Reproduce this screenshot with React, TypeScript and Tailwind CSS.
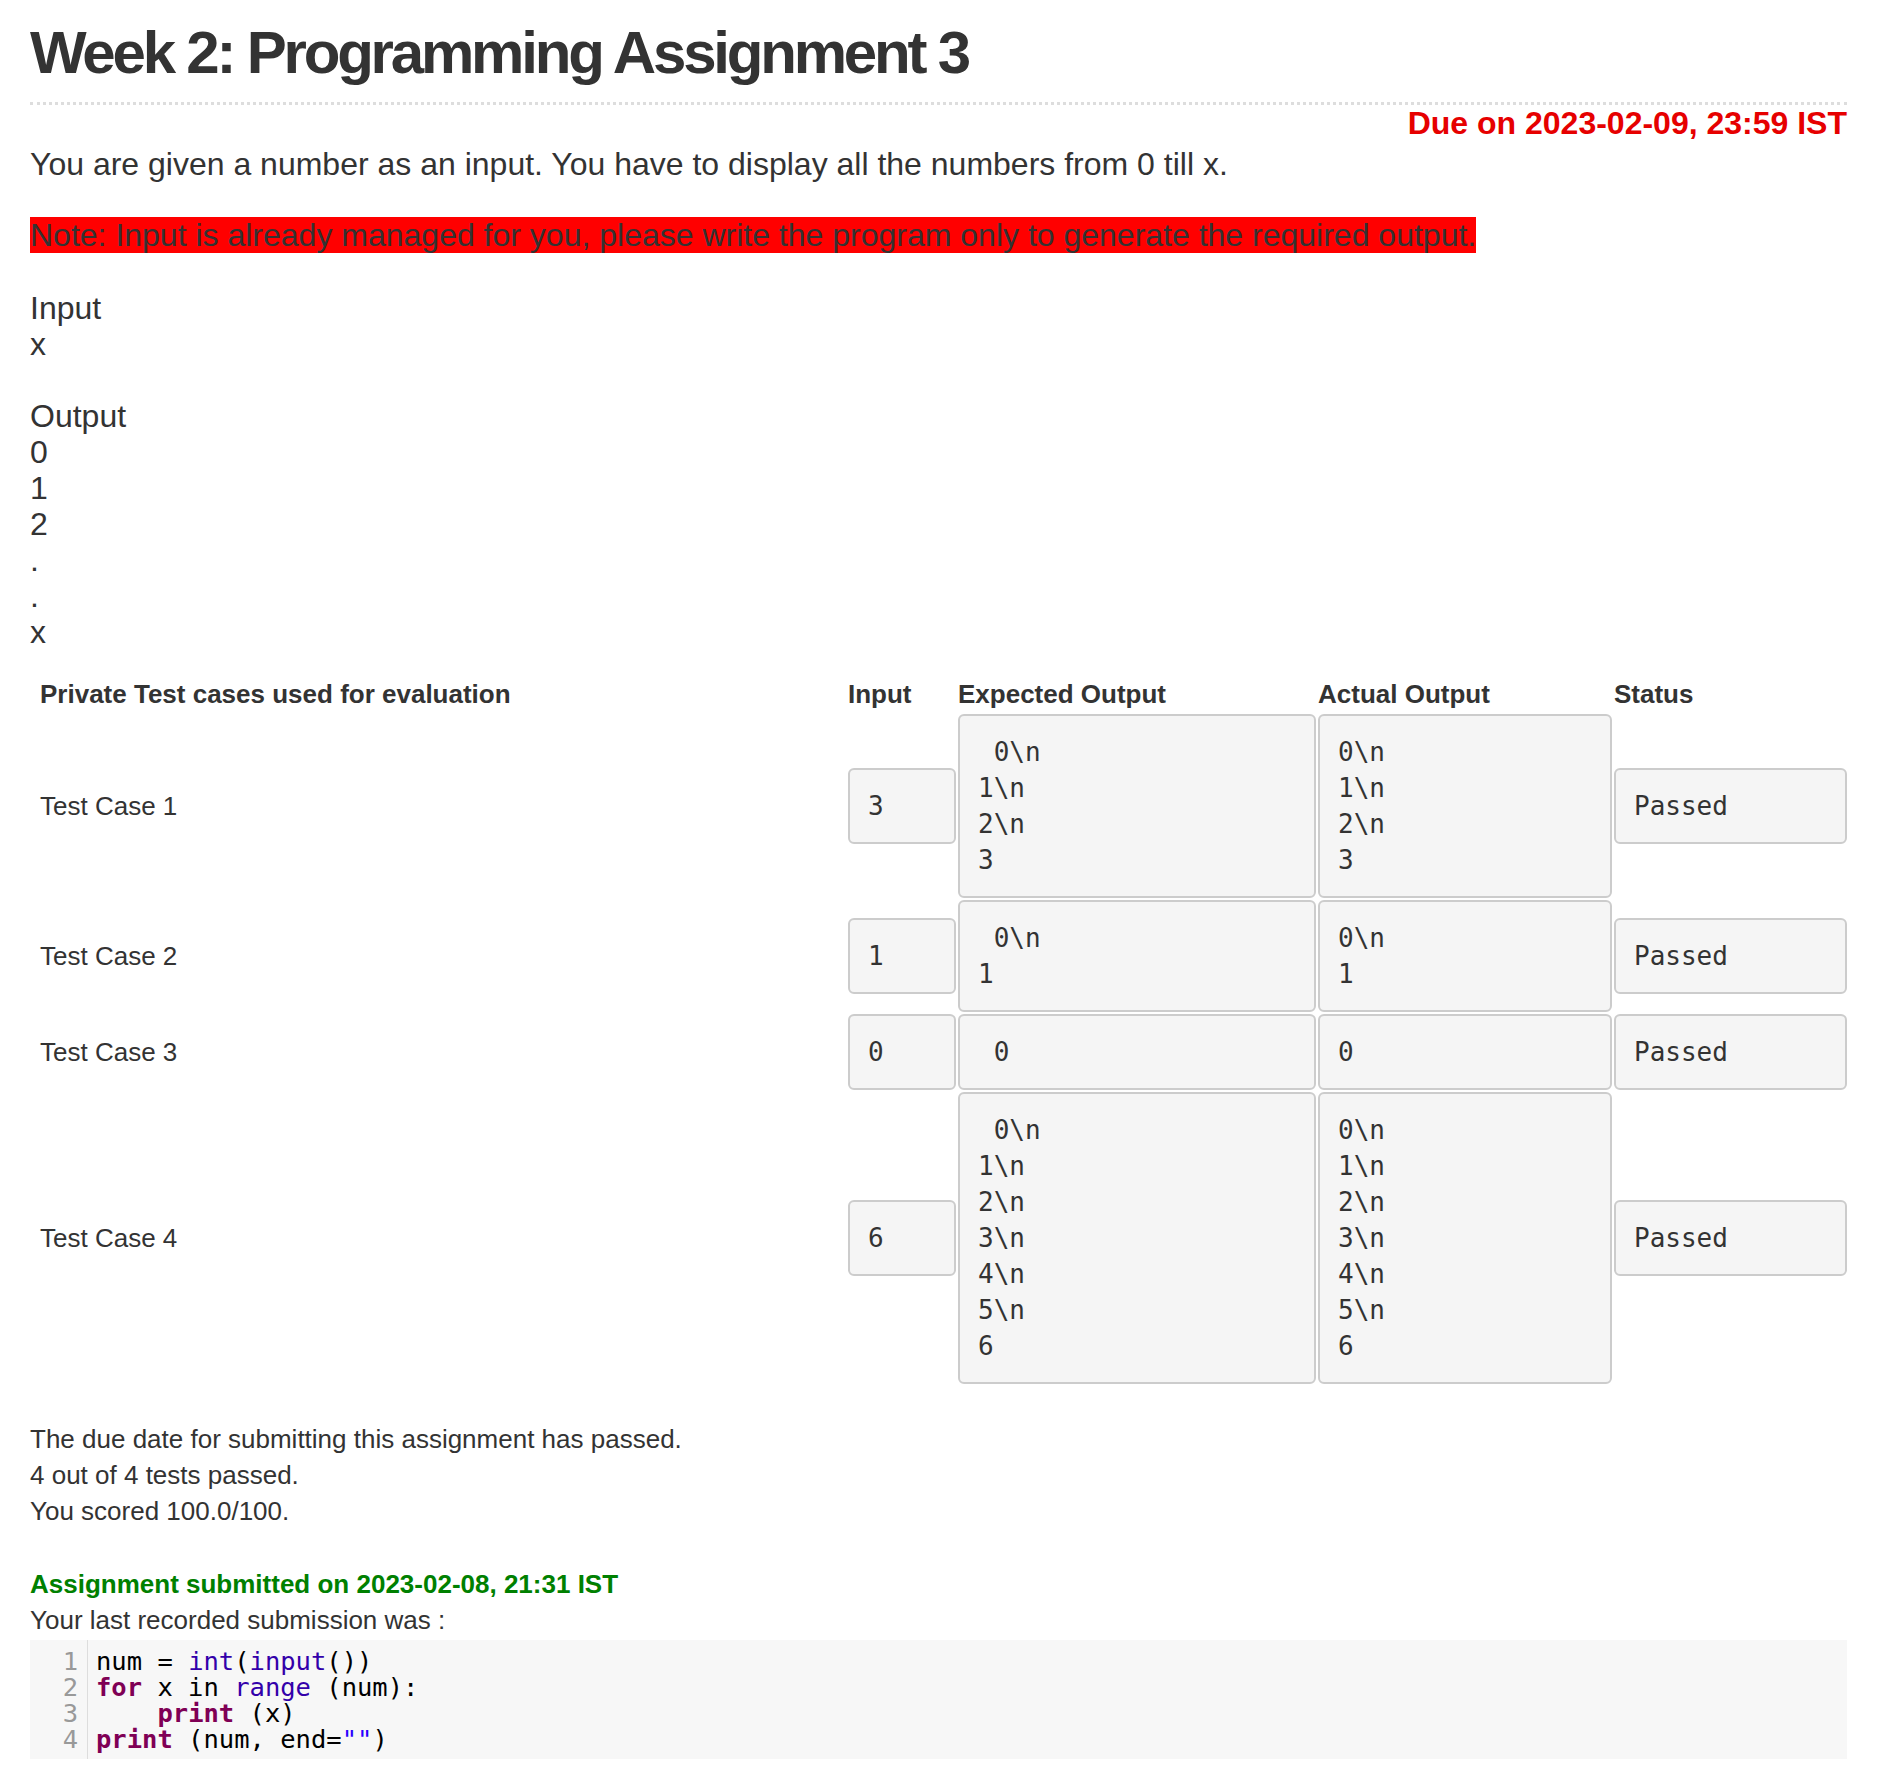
import React from "react";

const sans = "font-['Liberation_Sans',Arial,sans-serif]";
const mono = "font-['DejaVu_Sans_Mono',monospace]";

const cases = [
  {
    label: "Test Case 1",
    input: "3",
    expected: " 0\\n\n1\\n\n2\\n\n3",
    actual: "0\\n\n1\\n\n2\\n\n3",
  },
  {
    label: "Test Case 2",
    input: "1",
    expected: " 0\\n\n1",
    actual: "0\\n\n1",
  },
  {
    label: "Test Case 3",
    input: "0",
    expected: " 0",
    actual: "0",
  },
  {
    label: "Test Case 4",
    input: "6",
    expected: " 0\\n\n1\\n\n2\\n\n3\\n\n4\\n\n5\\n\n6",
    actual: "0\\n\n1\\n\n2\\n\n3\\n\n4\\n\n5\\n\n6",
  },
];

const Box = ({ children, className }: { children: React.ReactNode; className?: string }) => (
  <pre
    className={`m-0 whitespace-pre rounded-[6px] border-2 border-[#ccc] bg-[#f5f5f5] p-[18px] text-[26px] leading-[36px] text-[#333] ${mono} ${className ?? ""}`}
  >
    {children}
  </pre>
);

const kw = "font-bold text-[#7f0055]";
const bi = "text-[#3300aa]";

const App = () => {
  return (
    <div className={`min-h-[1789px] bg-white pl-[30px] pr-[33px] text-[#333] ${sans}`}>
      {/* heading */}
      <div className="border-b-[3px] border-dotted border-[#ddd] pt-[19px] pb-[16px]">
        <h1 className="text-[60px] font-bold leading-[67px] tracking-[-3.2px] text-[#333]">
          Week 2: Programming Assignment 3
        </h1>
      </div>
      <div className="text-right text-[32px] font-bold leading-[36px] text-[#e60000]">
        Due on 2023-02-09, 23:59 IST
      </div>

      {/* problem statement */}
      <div className="mt-[5px] text-[32px] leading-[36px]">
        <p>You are given a number as an input. You have to display all the numbers from 0 till x.</p>
        <p className="mt-[35px]">
          <span className="bg-[#ff0000]">
            Note: Input is already managed for you, please write the program only to generate the required output.
          </span>
        </p>
        <div className="mt-[37px]">
          <div>Input</div>
          <div>x</div>
          <div className="h-[36px]"></div>
          <div>Output</div>
          <div>0</div>
          <div>1</div>
          <div>2</div>
          <div>.</div>
          <div>.</div>
          <div>x</div>
        </div>
      </div>

      {/* test cases */}
      <div className="mt-[27px] flex flex-col gap-[2px] text-[26px]">
        <div className="flex gap-[2px] font-bold leading-[35px]">
          <div className="w-[816px] pl-[10px]">Private Test cases used for evaluation</div>
          <div className="w-[108px]">Input</div>
          <div className="w-[358px]">Expected Output</div>
          <div className="w-[294px]">Actual Output</div>
          <div className="w-[233px]">Status</div>
        </div>
        {cases.map((c) => (
          <div key={c.label} className="flex items-center gap-[2px]">
            <div className="w-[816px] pl-[10px] leading-[36px]">{c.label}</div>
            <Box className="w-[108px]">{c.input}</Box>
            <Box className="w-[358px]">{c.expected}</Box>
            <Box className="w-[294px]">{c.actual}</Box>
            <Box className="w-[233px]">Passed</Box>
          </div>
        ))}
      </div>

      {/* result */}
      <div className="mt-[37px] text-[26px] leading-[36px]">
        <div>The due date for submitting this assignment has passed.</div>
        <div>4 out of 4 tests passed.</div>
        <div>You scored 100.0/100.</div>
        <div className="mt-[37px] font-bold text-[#008000]">Assignment submitted on 2023-02-08, 21:31 IST</div>
        <div>Your last recorded submission was :</div>
      </div>

      {/* submitted code */}
      <div className={`mt-[2px] flex bg-[#f7f7f7] text-[25.5px] leading-[26px] ${mono}`}>
        <div className="w-[58px] border-r border-[#ddd] pt-[8px] pb-[7px] pr-[9px] text-right text-[#999]">
          <div>1</div>
          <div>2</div>
          <div>3</div>
          <div>4</div>
        </div>
        <pre className={`m-0 whitespace-pre pt-[8px] pb-[7px] pl-[8px] text-black ${mono}`}>
          <div>
            num = <span className={bi}>int</span>(<span className={bi}>input</span>())
          </div>
          <div>
            <span className={kw}>for</span> x in <span className={bi}>range</span> (num):
          </div>
          <div>
            {"    "}
            <span className={kw}>print</span> (x)
          </div>
          <div>
            <span className={kw}>print</span> (num, end=<span className="text-[#2a00ff]">""</span>)
          </div>
        </pre>
      </div>
    </div>
  );
};

export default App;
